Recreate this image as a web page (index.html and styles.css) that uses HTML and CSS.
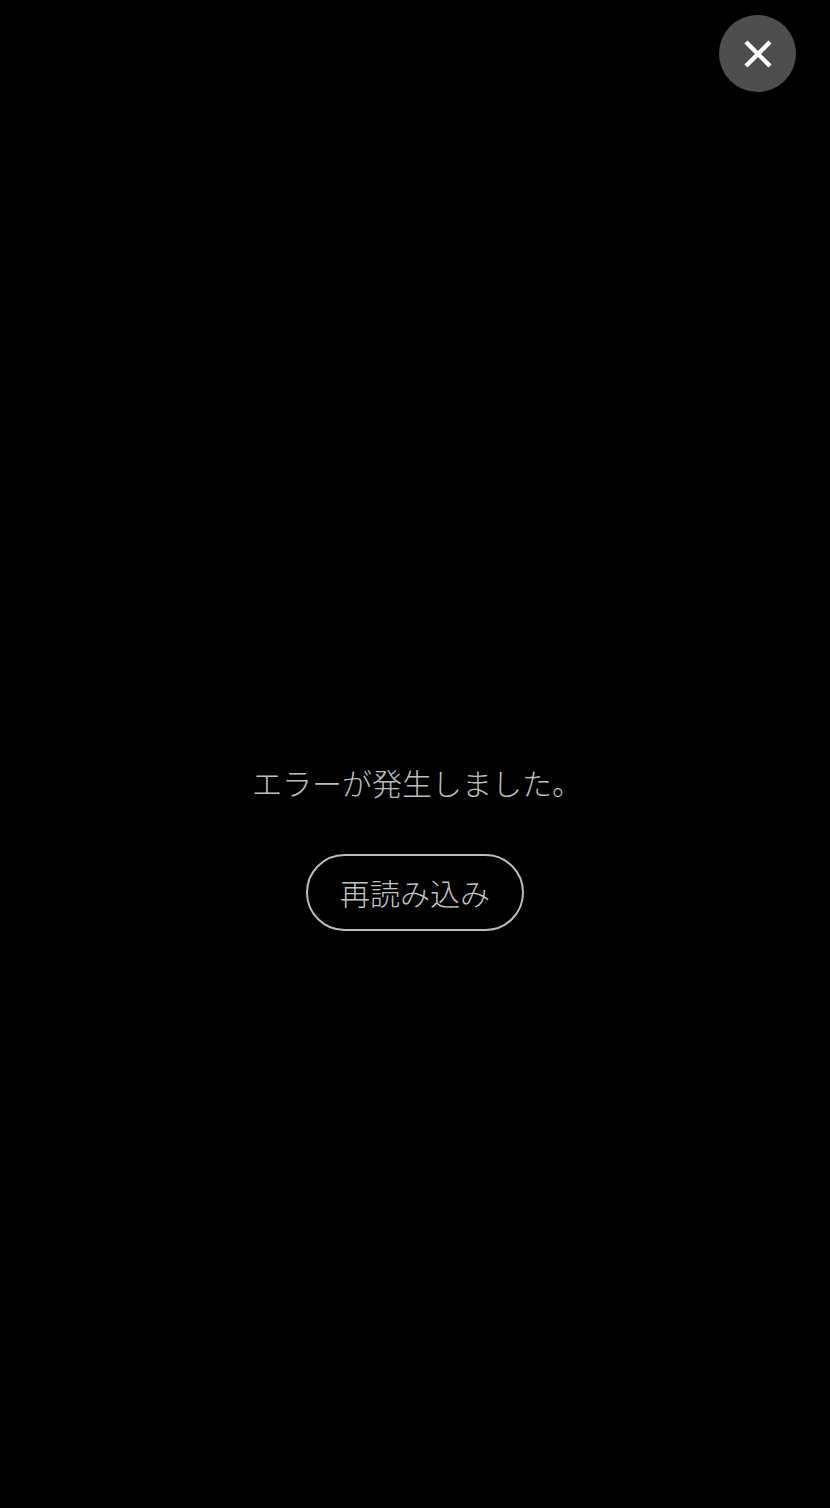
FILE: index.html
```html
<!DOCTYPE html>
<html lang="ja">
<head>
<meta charset="utf-8">
<title>エラー</title>
<link rel="stylesheet" href="styles.css">
</head>
<body>
<button class="close" aria-label="閉じる">
  <svg viewBox="0 0 28 28" width="28" height="28"><path d="M2 2 L26 26 M26 2 L2 26" stroke="#fff" stroke-width="4.4" stroke-linecap="butt" fill="none"/></svg>
</button>
<main class="error">
  <p class="message">エラーが発生しました。</p>
  <button class="reload">再読み込み</button>
</main>
</body>
</html>
```

FILE: styles.css
```css
html, body {
  margin: 0;
  padding: 0;
  background: #000;
  height: 100%;
}
body {
  font-family: "Noto Sans CJK JP", "Noto Sans", sans-serif;
  position: relative;
  min-height: 1508px;
}
.close {
  position: absolute;
  top: 15px;
  right: 34px;
  width: 77px;
  height: 77px;
  border-radius: 50%;
  border: none;
  background: #4e4e4e;
  padding: 0;
  display: flex;
  align-items: center;
  justify-content: center;
}
.error {
  display: flex;
  flex-direction: column;
  align-items: center;
  padding-top: 760px;
}
.message {
  margin: 0;
  font-size: 30px;
  font-weight: 300;
  line-height: 45px;
  color: #bdbdbd;
  padding-left: 4px;
}
.reload {
  margin-top: 49px;
  font-family: inherit;
  font-size: 30px;
  font-weight: 300;
  line-height: 43px;
  color: #c4c4c4;
  background: transparent;
  border: 2px solid #bcbcbc;
  border-radius: 40px;
  padding: 15px 32px;
}
```
